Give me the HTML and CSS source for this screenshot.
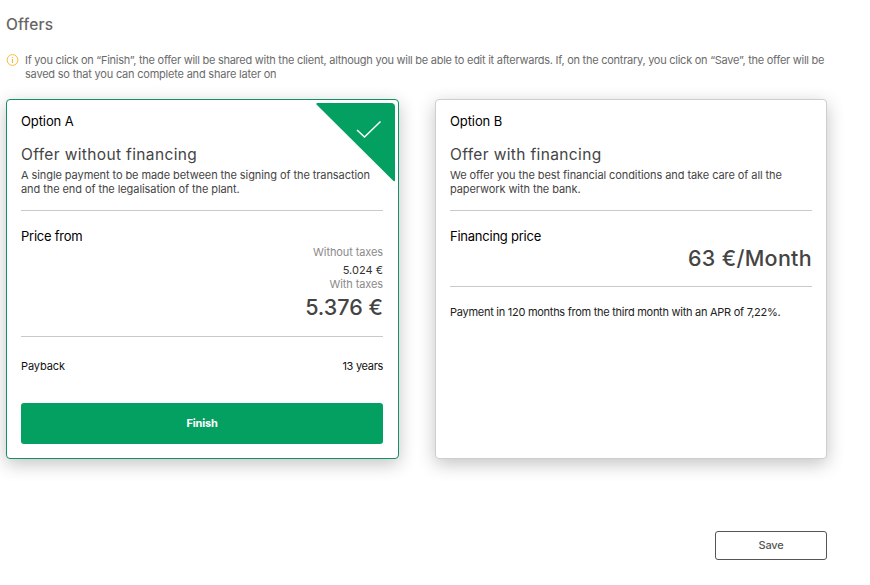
FILE: index.html
```html
<!DOCTYPE html>
<html lang="en">
<head>
    <meta charset="UTF-8">
    <meta name="viewport" content="width=device-width, initial-scale=1.0">
    <title>Offers</title>
    <link rel="stylesheet" href="styles.css">
</head>
<body>

<div class="container">
    <h1>Offers</h1>

    <div class="notice">
        <svg class="notice-icon" width="13" height="12" viewBox="0 0 13 12">
            <circle cx="6.500" cy="6" r="5.400" fill="none" stroke="#f3bd3c" stroke-width="1"/>
            <path d="M6.500 5v4M6.500 3v1" stroke="#f3bd3c" stroke-width="1.100"/>
        </svg>
        <p>If you click on “Finish”, the offer will be shared with the client, although you will be able to edit it afterwards. If, on the contrary, you click on “Save”, the offer will be<br><span class="notice-end">saved so that you can complete and share later on</span></p>
    </div>

    <div class="offers">
        <!-- Option A -->
        <div class="card selected">
            <svg class="corner" width="79" height="79" viewBox="0 0 79 79">
                <path d="M1 0H75Q79 0 79 4V77Q79 79 77.500 78L.5 1.500Q0 0 1 0Z" fill="#04a062"/>
                <path d="M41 27L48.500 34L64.500 18.500" fill="none" stroke="#fff" stroke-width="1.500"/>
            </svg>
            <div class="option">Option A</div>
            <h2>Offer without financing</h2>
            <p class="description">A single payment to be made between the signing of the transaction<br>and the end of the legalisation of the plant.</p>
            <hr>
            <div class="label">Price from</div>
            <div class="prices">
                <div class="tax">Without taxes</div>
                <div class="net">5.024 €</div>
                <div class="tax">With taxes</div>
                <div class="price">5.376 €</div>
            </div>
            <hr>
            <div class="payback">
                <span>Payback</span>
                <span class="years">13 years</span>
            </div>
            <button class="finish">Finish</button>
        </div>

        <!-- Option B -->
        <div class="card">
            <div class="option">Option B</div>
            <h2>Offer with financing</h2>
            <p class="description">We offer you the best financial conditions and take care of all the<br>paperwork with the bank.</p>
            <hr>
            <div class="label">Financing price</div>
            <div class="price monthly">63 €/Month</div>
            <hr>
            <p class="terms">Payment in 120 months from the third month with an APR of 7,22%.</p>
        </div>
    </div>

    <div class="actions">
        <button class="save">Save</button>
    </div>
</div>

</body>
</html>
```
FILE: styles.css
```css
* {
    box-sizing: border-box;
}
body {
    margin: 0;
    background-color: #fff;
    font-family: Inter, "Open Sans", sans-serif;
    font-size: 11px;
    color: #222;
}
.container {
    width: 827px;
    padding: 14px 0 0 6px;
}
h1, h2, p {
    margin: 0;
    font-weight: 400;
}
h1 {
    font-size: 15.5px;
    line-height: 22px;
    font-weight: 500;
    letter-spacing: 0.2px;
    color: #666;
}
.notice {
    display: flex;
    gap: 6px;
    margin-top: 17px;
    line-height: 14px;
    letter-spacing: -0.26px;
    white-space: nowrap;
    color: #6b6b6b;
}
.notice-icon {
    flex: none;
    margin-top: 1px;
}
.notice-end {
    letter-spacing: -0.21px;
}
.offers {
    display: grid;
    grid-template-columns: 393px 392px;
    gap: 36px;
    margin-top: 18px;
}
.card {
    position: relative;
    height: 360px;
    padding: 12px 14px 14px;
    background-color: #fff;
    border: 1px solid #ccced2;
    border-radius: 4px;
    box-shadow: 0 5px 18px rgba(0, 0, 0, 0.24);
}
.card.selected {
    padding-right: 15px;
    border-color: #148f66;
}
/* Triangle with the check mark */
.corner {
    position: absolute;
    top: 3px;
    right: 3px;
}
.option, .label {
    font-size: 13px;
    line-height: 18px;
    letter-spacing: -0.1px;
    color: #000;
}
h2 {
    margin-top: 14px;
    font-size: 15.5px;
    line-height: 22px;
    letter-spacing: 0.36px;
    color: #444;
}
.description {
    margin-top: 2px;
    line-height: 14px;
    letter-spacing: -0.08px;
    white-space: nowrap;
    color: #444;
}
hr {
    height: 1px;
    margin: 14px 0 0;
    border: 0;
    background-color: #c9c9c9;
}
.label {
    margin-top: 16px;
    letter-spacing: -0.24px;
}
.prices {
    text-align: right;
    line-height: 14px;
}
.tax {
    letter-spacing: -0.1px;
    color: #8a8a8a;
}
.net {
    margin-top: 4px;
    color: #333;
}
.price {
    margin-top: 2px;
    font-size: 21.5px;
    line-height: 28px;
    font-weight: 500;
    text-align: right;
    color: #444;
}
.prices + hr {
    margin-top: 15px;
}
.monthly {
    margin-top: -1px;
    letter-spacing: 0.3px;
}
.payback {
    display: flex;
    justify-content: space-between;
    margin-top: 22px;
    line-height: 14px;
    letter-spacing: -0.1px;
    color: #111;
}
.years {
    letter-spacing: -0.3px;
}
button {
    padding: 0 0 2px;
    font-family: inherit;
    font-size: 11px;
    letter-spacing: -0.2px;
    border-radius: 3px;
    cursor: pointer;
}
.finish {
    display: block;
    width: 100%;
    height: 41px;
    margin-top: 30px;
    border: 0;
    background-color: #04a062;
    color: #fff;
    font-weight: 700;
}
.terms {
    margin-top: 18px;
    line-height: 14px;
    letter-spacing: -0.27px;
    white-space: nowrap;
    color: #222;
}
.actions {
    display: flex;
    justify-content: flex-end;
    margin-top: 72px;
}
.save {
    width: 112px;
    height: 29px;
    border: 1px solid #555;
    background-color: #fff;
    color: #555;
    font-weight: 500;
}
```
